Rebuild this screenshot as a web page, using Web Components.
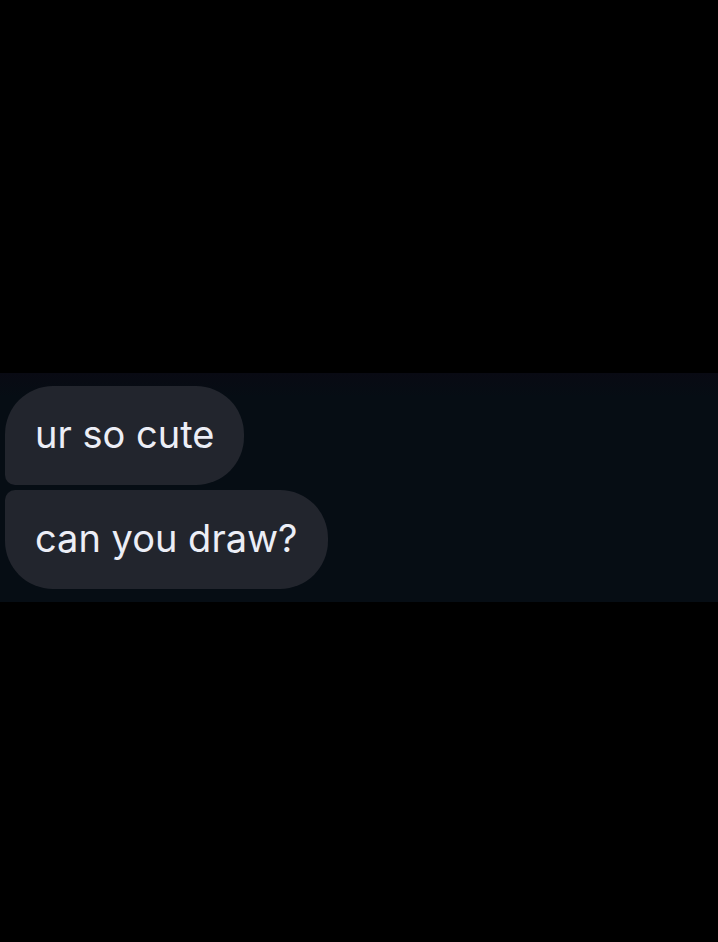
<!DOCTYPE html>
<html lang="en">
<head>
<meta charset="UTF-8">
<meta name="viewport" content="width=device-width, initial-scale=1">
<title>Chat</title>
<style>
  body {
    margin: 0;
    background: #000;
    font-family: Inter, "Liberation Sans", sans-serif;
  }
</style>
</head>
<body>
  <chat-screen>
    <chat-thread>
      <chat-bubble position="first">ur so cute</chat-bubble>
      <chat-bubble position="last">can you draw?</chat-bubble>
    </chat-thread>
  </chat-screen>

<script>
// Full height page, keeps the thread near the middle
class ChatScreen extends HTMLElement {
  constructor() {
    super();
    this.attachShadow({ mode: "open" });
  }

  connectedCallback() {
    this.shadowRoot.innerHTML = `
      <style>
        :host {
          display: grid;
          grid-template-rows: 373fr auto 340fr;
          min-height: 100vh;
          background: #000;
        }
        main { grid-row: 2; }
      </style>
      <main><slot></slot></main>
    `;
  }
}

// Stack of messages from one sender
class ChatThread extends HTMLElement {
  constructor() {
    super();
    this.attachShadow({ mode: "open" });
  }

  connectedCallback() {
    this.shadowRoot.innerHTML = `
      <style>
        :host {
          display: flex;
          flex-direction: column;
          align-items: flex-start;
          gap: 5px;
          padding: 13px 5px;
          background: linear-gradient(#090a13, #060d14 24px);
        }
      </style>
      <slot></slot>
    `;
  }
}

// position: "first" or "last" picks which left corner is tight
class ChatBubble extends HTMLElement {
  constructor() {
    super();
    this.attachShadow({ mode: "open" });
  }

  connectedCallback() {
    this.shadowRoot.innerHTML = `
      <style>
        :host {
          display: block;
          padding: 24px 30px 27px;
          border-radius: 48px;
          background: #22252d;
          color: #eceef6;
          font-size: 38px;
          line-height: 48px;
        }
        :host([position="first"]) { border-bottom-left-radius: 10px; }
        :host([position="last"]) { border-top-left-radius: 10px; }
        p { margin: 0; }
      </style>
      <p><slot></slot></p>
    `;
  }
}

customElements.define("chat-screen", ChatScreen);
customElements.define("chat-thread", ChatThread);
customElements.define("chat-bubble", ChatBubble);
</script>
</body>
</html>
